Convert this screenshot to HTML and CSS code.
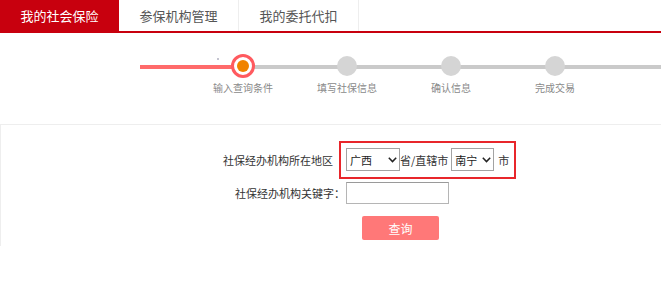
FILE: index.html
```html
<!DOCTYPE html>
<html lang="zh-CN">
<head>
<meta charset="utf-8">
<title>我的社会保险</title>
<link rel="stylesheet" href="styles.css">
</head>
<body>
<div class="tabs">
  <div class="tab active">我的社会保险</div>
  <div class="tab">参保机构管理</div>
  <div class="tab">我的委托代扣</div>
</div>
<div class="steps">
  <div class="step current"><div class="mark"><span class="ring"><span class="core"></span></span></div><span class="step-label">输入查询条件</span></div>
  <div class="step"><div class="mark"><span class="circle"></span></div><span class="step-label">填写社保信息</span></div>
  <div class="step"><div class="mark"><span class="circle"></span></div><span class="step-label">确认信息</span></div>
  <div class="step"><div class="mark"><span class="circle"></span></div><span class="step-label">完成交易</span></div>
</div>
<div class="panel">
  <div class="row">
    <span class="lbl lbl-region">社保经办机构所在地区</span>
    <div class="region-box">
      <span class="sel sel-prov">广西<svg class="chev" width="9" height="6" viewBox="0 0 9 6"><path d="M0.8 0.8 L4.5 4.6 L8.2 0.8" fill="none" stroke="#222" stroke-width="1.5"/></svg></span>
      <span class="txt">省/直辖市</span>
      <span class="sel sel-city">南宁<svg class="chev" width="9" height="6" viewBox="0 0 9 6"><path d="M0.8 0.8 L4.5 4.6 L8.2 0.8" fill="none" stroke="#222" stroke-width="1.5"/></svg></span>
      <span class="txt txt-city">市</span>
    </div>
  </div>
  <div class="row row-key">
    <span class="lbl lbl-key">社保经办机构关键字：</span>
    <span class="input"></span>
  </div>
  <div class="row row-btn">
    <button class="btn" type="button">查询</button>
  </div>
</div>
</body>
</html>
```
FILE: styles.css
```css
html, body {
  margin: 0;
  padding: 0;
  background: #fff;
}
body {
  font-family: "Noto Sans CJK SC", "Noto Sans", sans-serif;
  color: #333;
}
.tabs {
  display: flex;
  height: 31px;
  border-bottom: 2px solid #c8000e;
}
.tab {
  width: 120px;
  box-sizing: border-box;
  border-right: 1px solid #eee;
  display: flex;
  align-items: center;
  justify-content: center;
  font-size: 13px;
  color: #555;
  padding-bottom: 1px;
}
.tab.active {
  width: 119px;
  background: #c8000e;
  color: #fff;
  border-right: none;
}
.steps {
  display: flex;
  margin-left: 140px;
  padding-left: 51px;
  padding-top: 21px;
  height: 70px;
  box-sizing: border-box;
  background:
    linear-gradient(#c4c4d0, #c4c4d0) 77px 25px / 2px 2px no-repeat,
    linear-gradient(to right, #ff6b6b 94px, #cacaca 94px) 0 32px / 100% 4px no-repeat;
  height: 91px;
}
.step {
  width: 104px;
  display: flex;
  flex-direction: column;
  align-items: center;
}
.mark {
  height: 24px;
  display: flex;
  align-items: center;
  justify-content: center;
}
.ring {
  width: 24px;
  height: 24px;
  box-sizing: border-box;
  border: 3px solid #ff5a5f;
  border-radius: 50%;
  background: #fff;
  display: flex;
  align-items: center;
  justify-content: center;
}
.core {
  width: 12px;
  height: 12px;
  border-radius: 50%;
  background: #f08300;
}
.circle {
  width: 20px;
  height: 20px;
  border-radius: 50%;
  background: #d5d5d5;
}
.step-label {
  margin-top: 3px;
  font-size: 10px;
  line-height: 14px;
  color: #8a8a8a;
  white-space: nowrap;
}
.panel {
  border-top: 1px solid #eee;
  border-left: 1px solid #eee;
  padding-top: 16px;
  padding-bottom: 6px;
  font-size: 11px;
  color: #333;
}
.row {
  display: flex;
  align-items: center;
}
.lbl {
  text-align: right;
  white-space: nowrap;
  font-size: 11px;
}
.lbl-region {
  width: 332px;
  margin-right: 6px;
}
.lbl-key {
  width: 344px;
  margin-right: 1px;
}
.region-box {
  display: flex;
  align-items: center;
  border: 2px solid #e8262b;
  padding: 5px 5px 6px 5px;
  height: 23px;
}
.sel {
  height: 23px;
  box-sizing: border-box;
  border: 1px solid #a3a3a3;
  display: flex;
  align-items: center;
  justify-content: space-between;
  padding: 0 2px 0 3px;
  font-size: 11px;
  color: #222;
  background: #fff;
}
.sel-prov {
  width: 54px;
}
.sel-city {
  width: 43px;
  margin-left: 3px;
}
.chev {
  display: block;
}
.txt {
  font-size: 11px;
  white-space: nowrap;
}
.txt-city {
  margin-left: 4px;
}
.row-key {
  margin-top: 3px;
}
.input {
  display: block;
  width: 103px;
  height: 22px;
  box-sizing: border-box;
  border: 1px solid #b5b5b5;
  border-top-color: #9a9a9a;
  background: #fff;
}
.row-btn {
  margin-top: 12px;
  padding-left: 361px;
}
.btn {
  width: 77px;
  height: 24px;
  border: none;
  border-radius: 2px;
  background: #ff7878;
  color: #fff;
  font-family: "Noto Sans CJK SC", "Noto Sans", sans-serif;
  font-size: 12px;
  padding: 0;
}
```
